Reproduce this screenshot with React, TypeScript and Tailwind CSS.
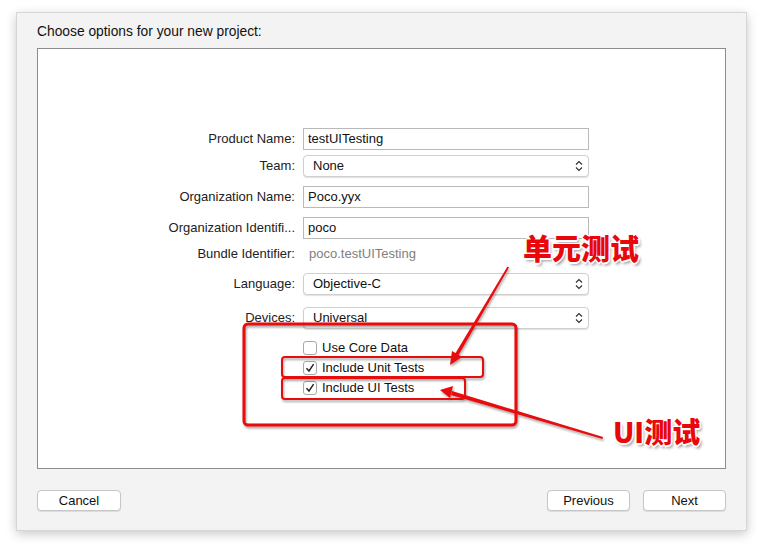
import React from 'react'

const font = { fontFamily: '"Liberation Sans", "Noto Sans CJK SC", sans-serif' }

function Updown() {
  return (
    <svg width="8" height="12" viewBox="0 0 8 12" className="shrink-0">
      <path d="M1 4.5 L4 1.5 L7 4.5" fill="none" stroke="#333" strokeWidth="1.2" />
      <path d="M1 7.5 L4 10.5 L7 7.5" fill="none" stroke="#333" strokeWidth="1.2" />
    </svg>
  )
}

function Row({ label, children, className = '' }: { label: string; children: React.ReactNode; className?: string }) {
  return (
    <div className={`grid grid-cols-[257px_286px] gap-x-2 items-center h-[22px] ${className}`}>
      <div className="text-right text-[13px] text-[#222] whitespace-nowrap">{label}</div>
      {children}
    </div>
  )
}

function TextField({ value }: { value: string }) {
  return (
    <div className="h-[22px] bg-white border border-[#b9b9b9] flex items-center px-[4px] text-[13px] text-[#111]">
      {value}
    </div>
  )
}

function Select({ value }: { value: string }) {
  return (
    <div className="h-[22px] bg-white border border-[#cfcfcf] rounded-[4px] shadow-[0_1px_1px_rgba(0,0,0,0.12)] flex items-center justify-between pl-[9px] pr-[5px] text-[13px] text-[#111]">
      <span>{value}</span>
      <Updown />
    </div>
  )
}

function Check({ label, checked }: { label: string; checked?: boolean }) {
  return (
    <div className="grid grid-cols-[257px_286px] gap-x-2 items-center h-[20px]">
      <div />
      <div className="flex items-center gap-[5px] text-[13px] text-[#111]">
        <div className="w-[14px] h-[14px] bg-white border border-[#a9a9a9] rounded-[3px] flex items-center justify-center">
          {checked && (
            <svg width="10" height="10" viewBox="0 0 10 10">
              <path d="M1.5 5.2 L4 8 L8.6 1.2" fill="none" stroke="#222" strokeWidth="1.4" />
            </svg>
          )}
        </div>
        <span>{label}</span>
      </div>
    </div>
  )
}

function Btn({ children, w = 'w-[83px]' }: { children: React.ReactNode; w?: string }) {
  return (
    <div className={`${w} h-[21px] bg-white border border-[#c6c6c6] rounded-[4px] shadow-[0_1px_1px_rgba(0,0,0,0.1)] flex items-center justify-center text-[13px] text-[#111]`}>
      {children}
    </div>
  )
}

function Annotations() {
  const red = '#e8080c'
  return (
    <svg className="absolute inset-0 pointer-events-none" width="764" height="552">
      <defs>
        <filter id="sh" x="-10%" y="-10%" width="120%" height="130%">
          <feDropShadow dx="1" dy="2" stdDeviation="1.2" floodColor="#000" floodOpacity="0.35" />
        </filter>
      </defs>
      <g filter="url(#sh)">
        <rect x="244" y="324" width="272" height="101" rx="4" fill="none" stroke={red} strokeWidth="3" />
        <rect x="282" y="357" width="201" height="20" rx="3" fill="none" stroke={red} strokeWidth="2" />
        <rect x="282" y="378" width="183" height="21" rx="3" fill="none" stroke={red} strokeWidth="2" />
        {/* arrow 1 */}
        <polygon points="507.5,266.5 509,267.5 458,356 455,354" fill={red} />
        <polygon points="450,365 452,351 462,357" fill={red} />
        {/* arrow 2 */}
        <polygon points="603,437 602.5,439 451,395 452,391" fill={red} />
        <polygon points="440,390 453,386 450,398" fill={red} />
      </g>
    </svg>
  )
}

function Label({ text, className }: { text: string; className: string }) {
  return (
    <div
      className={`absolute font-black text-[#e8080c] leading-none whitespace-nowrap ${className}`}
      style={{
        fontFamily: '"Noto Sans CJK SC", "Liberation Sans", sans-serif',
        textShadow:
          '-1.5px 0 #fff, 1.5px 0 #fff, 0 -1.5px #fff, 0 1.5px #fff, -1px -1px #fff, 1px 1px #fff, -1px 1px #fff, 1px -1px #fff, 2px 3px 3px rgba(0,0,0,0.4)',
      }}
    >
      {text}
    </div>
  )
}

export default function App() {
  return (
    <div className="relative w-[764px] h-[552px] bg-white overflow-hidden" style={font}>
      <div className="ml-[16px] mt-[12px] w-[731px] h-[519px] bg-[#f3f3f3] border border-[#d6d6d6] shadow-[0_3px_10px_rgba(0,0,0,0.22)] flex flex-col px-[20px]">
        <div className="h-[35px] flex items-center text-[13.8px] text-[#111] pt-[4px]">Choose options for your new project:</div>
        <div className="h-[421px] bg-white border border-[#8c8c8c] pt-[79px]">
          <Row label="Product Name:">
            <TextField value="testUITesting" />
          </Row>
          <Row label="Team:" className="mt-[5px]">
            <Select value="None" />
          </Row>
          <Row label="Organization Name:" className="mt-[9px]">
            <TextField value="Poco.yyx" />
          </Row>
          <Row label="Organization Identifi..." className="mt-[9px]">
            <TextField value="poco" />
          </Row>
          <Row label="Bundle Identifier:" className="mt-[4px]">
            <div className="text-[13px] text-[#808080] pl-[6px]">poco.testUITesting</div>
          </Row>
          <Row label="Language:" className="mt-[8px]">
            <Select value="Objective-C" />
          </Row>
          <Row label="Devices:" className="mt-[12px]">
            <Select value="Universal" />
          </Row>
          <div className="mt-[9px]">
            <Check label="Use Core Data" />
            <Check label="Include Unit Tests" checked />
            <Check label="Include UI Tests" checked />
          </div>
        </div>
        <div className="flex items-center justify-between mt-[21px]">
          <Btn w="w-[84px]">Cancel</Btn>
          <div className="flex gap-[13px]">
            <Btn>Previous</Btn>
            <Btn>Next</Btn>
          </div>
        </div>
      </div>
      <Annotations />
      <Label text="单元测试" className="left-[523px] top-[233px] text-[29px]" />
      <Label text="UI测试" className="left-[613px] top-[417px] text-[28px]" />
    </div>
  )
}
